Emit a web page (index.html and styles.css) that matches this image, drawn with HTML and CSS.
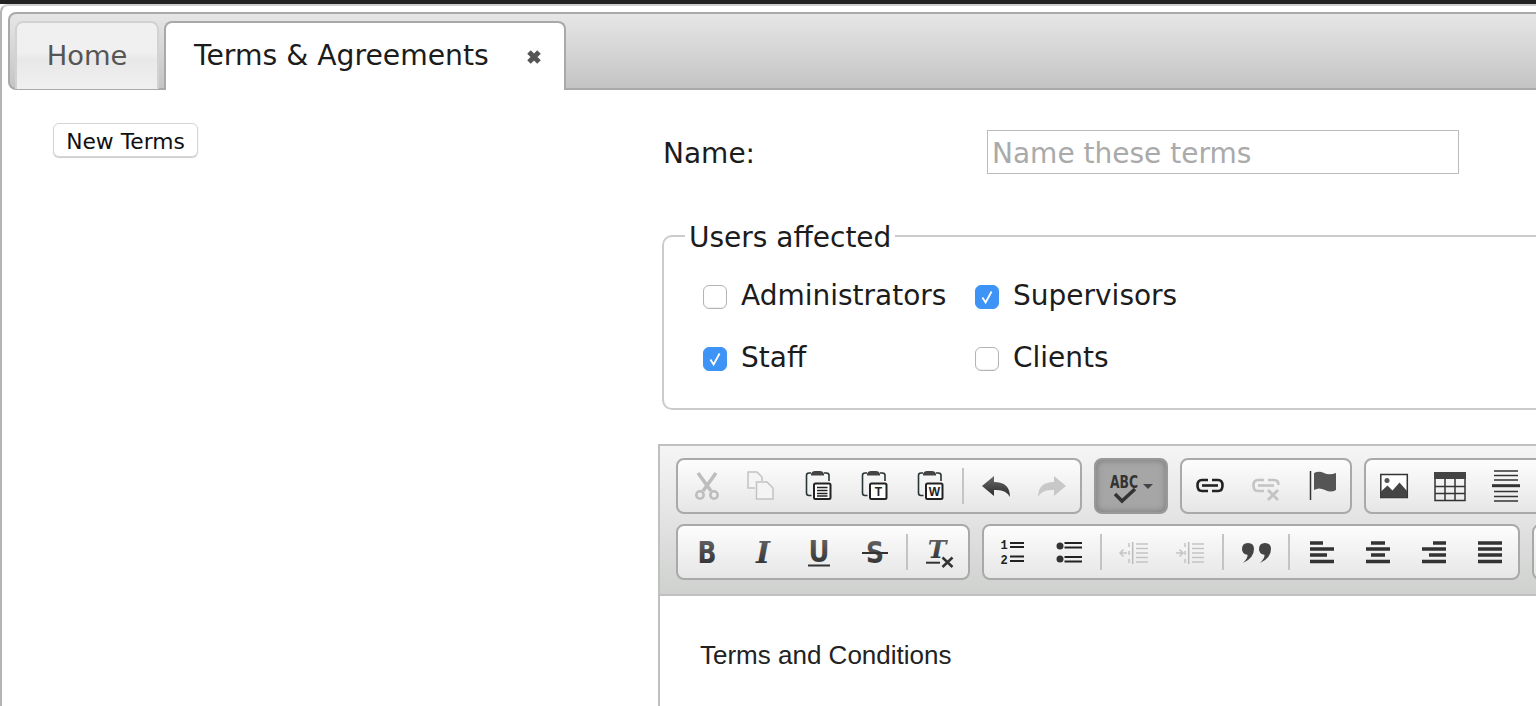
FILE: index.html
```html
<!DOCTYPE html>
<html lang="en">
<head>
<meta charset="utf-8">
<title>Terms &amp; Agreements</title>
<link rel="stylesheet" href="styles.css">
</head>
<body>
<svg class="defs" width="0" height="0" aria-hidden="true">
  <defs>
    <linearGradient id="dark" x1="0" y1="0" x2="0" y2="1"><stop offset="0" stop-color="#6a6a6a"/><stop offset="1" stop-color="#2a2a2a"/></linearGradient>
    <symbol id="clip" viewBox="0 0 32 32">
      <path d="M8 3H6Q3.500 3 3.500 5.500V23Q3.500 25.500 6 25.500H8.500M21 3H23.500Q26 3 26 5.500V11" fill="none" stroke="#2b3436" stroke-width="1.600"/>
      <path d="M8 5.500V3.500Q9 1 11.500 1H17.500Q20 1 21 3.500V5.500Z" fill="#444"/>
      <rect x="11" y="13.500" width="16.500" height="15.500" rx="1.500" fill="#fff" stroke="#222" stroke-width="2"/>
    </symbol>
  </defs>
</svg>
<div class="top-strip"></div>
<div class="window">
  <nav class="tabs">
    <a class="tab">Home</a>
    <a class="tab tab-active">Terms &amp; Agreements<svg class="tab-close" viewBox="0 0 16 16"><path d="M3 3L13 13M13 3L3 13" stroke="#555" stroke-width="5"/></svg></a>
  </nav>
  <main class="content">
    <aside class="sidebar"><button class="new-btn" type="button">New Terms</button></aside>
    <section class="form">
      <div class="name-row">
        <label class="name-label" for="name">Name:</label>
        <input class="name-input" id="name" type="text" placeholder="Name these terms">
      </div>
      <fieldset class="users">
        <legend>Users affected</legend>
        <div class="users-grid">
          <label class="check"><span class="box"></span>Administrators</label>
          <label class="check"><span class="box on"><svg viewBox="0 0 24 24"><path d="M7 12.500L10.500 18L17 6" fill="none" stroke="#fff" stroke-width="2"/></svg></span>Supervisors</label>
          <label class="check"><span class="box on"><svg viewBox="0 0 24 24"><path d="M7 12.500L10.500 18L17 6" fill="none" stroke="#fff" stroke-width="2"/></svg></span>Staff</label>
          <label class="check"><span class="box"></span>Clients</label>
        </div>
      </fieldset>
      <div class="editor">
        <div class="toolbar">
          <div class="tool-row">
            <div class="group">
              <span class="btn"><svg viewBox="0 0 32 32"><g fill="none" stroke="#bdbdbd"><path d="M7 3L20 21M25 3L12 21" stroke-width="3.500"/><circle cx="9" cy="25" r="3.700" stroke-width="2.500"/><circle cx="23" cy="25" r="3.700" stroke-width="2.500"/></g></svg></span>
              <span class="btn"><svg viewBox="0 0 32 32"><g fill="#f4f4f4" stroke="#c2c2c2" stroke-width="1.500"><path d="M8 18H1V2H10L15 7V11"/><path d="M9.500 12H20L26 18V29H9.500Z"/></g></svg></span>
              <span class="btn"><svg viewBox="0 0 32 32"><use href="#clip"/><path d="M14 17.500H24.500M14 20.500H24.500M14 23.500H24.500M14 26H24.500" stroke="#222" stroke-width="1.500"/></svg></span>
              <span class="btn"><svg viewBox="0 0 32 32"><use href="#clip"/><text class="glyph-t" x="19.300" y="26">T</text></svg></span>
              <span class="btn"><svg viewBox="0 0 32 32"><use href="#clip"/><text class="glyph-t" x="19.300" y="26">W</text></svg></span>
              <span class="sep"></span>
              <span class="btn"><svg viewBox="0 0 32 32"><path d="M2 16L14 6V12Q30 12 30 27Q26 19 14 20V26Z" fill="url(#dark)"/></svg></span>
              <span class="btn"><svg viewBox="0 0 32 32"><path d="M30 16L18 6V12Q2 12 2 27Q6 19 18 20V26Z" fill="#c8c8c8"/></svg></span>
            </div>
            <div class="group group-on">
              <svg class="spell" viewBox="0 0 70 52"><text class="abc" x="14" y="28" textLength="28" lengthAdjust="spacingAndGlyphs">ABC</text><path d="M19 34L26 41L39 29" fill="none" stroke="#333" stroke-width="3.500"/><path d="M47 24H57L52 29Z" fill="#444"/></svg>
            </div>
            <div class="group group-flush">
              <span class="btn"><svg viewBox="0 0 32 32"><g fill="none" stroke="#222" stroke-width="2.600"><path d="M14 10H8Q3.500 10 3.500 15.500Q3.500 21 8 21H14"/><path d="M18 10H24Q28.500 10 28.500 15.500Q28.500 21 24 21H18"/><path d="M8 15.500H24"/></g></svg></span>
              <span class="btn"><svg viewBox="0 0 32 32"><g fill="none" stroke="#c4c4c4" stroke-width="2.600"><path d="M14 10H8Q3.500 10 3.500 15.500Q3.500 21 8 21H14"/><path d="M18 10H24Q28.500 10 28.500 15"/><path d="M8 15.500H24"/><path d="M18 20L28 30M28 20L18 30" stroke-width="3"/></g></svg></span>
              <span class="btn"><svg viewBox="0 0 32 32"><path d="M4.500 1V30" stroke="#333" stroke-width="1.500"/><path d="M8 3Q13 0.500 18 3T30 3V20Q25 23 19 20T8 20Z" fill="#555"/></svg></span>
            </div>
            <div class="group group-flush group-open">
              <span class="btn"><svg viewBox="0 0 32 32"><rect x="2.800" y="4.500" width="26.500" height="23" fill="#fff" stroke="#333" stroke-width="1.500"/><circle cx="9" cy="10.500" r="2.500" fill="#555"/><path d="M3 27.500V21.500L9.500 15.500L14.500 20.500L21.500 12.500L29 21V27.500Z" fill="#444"/></svg></span>
              <span class="btn"><svg viewBox="0 0 32 32"><rect x="0" y="2" width="32" height="7" fill="#444"/><path d="M1 9V30.500H31V9M1 16.500H31M1 23.500H31M11 9V30.500M21 9V30.500" fill="none" stroke="#333" stroke-width="1.500"/></svg></span>
              <span class="btn"><svg viewBox="0 0 32 32"><path d="M4 1H28M4 5.500H28M4 10H28M4 21.500H28M4 26.500H28M4 31H28" stroke="#333" stroke-width="1.600"/><path d="M2 15.700H30" stroke="#333" stroke-width="3"/></svg></span>
            </div>
          </div>
          <div class="tool-row">
            <div class="group">
              <span class="btn"><svg class="tall" viewBox="0 0 40 40"><text class="fmt fmt-b" x="20" y="31" textLength="19" lengthAdjust="spacingAndGlyphs">B</text></svg></span>
              <span class="btn"><svg class="tall" viewBox="0 0 40 40"><text class="fmt fmt-i" x="20" y="31">I</text></svg></span>
              <span class="btn"><svg class="tall" viewBox="0 0 40 40"><text class="fmt fmt-b" x="20" y="30" textLength="21" lengthAdjust="spacingAndGlyphs">U</text><path d="M9 33.500H31" stroke="#333" stroke-width="2"/></svg></span>
              <span class="btn"><svg class="tall" viewBox="0 0 40 40"><text class="fmt fmt-b" x="20" y="31" textLength="18" lengthAdjust="spacingAndGlyphs">S</text><path d="M7 21H33" stroke="#333" stroke-width="2"/></svg></span>
              <span class="sep"></span>
              <span class="btn"><svg class="tall" viewBox="0 0 40 40"><text class="fmt fmt-i fmt-t" x="17" y="26">T</text><path d="M6 30.700H20" stroke="#333" stroke-width="2"/><path d="M22.500 25.500L32.500 35M32.500 25.500L22.500 35" stroke="#333" stroke-width="2.500"/></svg></span>
            </div>
            <div class="group">
              <span class="btn"><svg viewBox="0 0 32 32"><text class="num" x="7" y="13">1</text><text class="num" x="7" y="28">2</text><path d="M13 7H27M13 11H27M13 20.500H27M13 25H27" stroke="#222" stroke-width="2"/></svg></span>
              <span class="btn"><svg viewBox="0 0 32 32"><circle cx="7" cy="10" r="3.500" fill="#333"/><circle cx="7" cy="23" r="3.500" fill="#333"/><path d="M11.500 7H29M11.500 11.500H29M11.500 21H29M11.500 25.500H29" stroke="#222" stroke-width="2"/></svg></span>
              <span class="sep"></span>
              <span class="btn"><svg viewBox="0 0 32 32"><path d="M14.700 6V28" stroke="#bbb" stroke-width="1.500"/><path d="M18 8H30M18 12.500H30M18 17H30M18 21.500H30M18 26H30" stroke="#c4c4c4" stroke-width="1.500"/><path d="M2 17H9M5.500 13.500L2 17L5.500 20.500" fill="none" stroke="#c4c4c4" stroke-width="1.500"/><path d="M11 7V11M11 15V19M11 23V27" stroke="#c4c4c4" stroke-width="1.500"/></svg></span>
              <span class="btn"><svg viewBox="0 0 32 32"><path d="M14.700 6V28" stroke="#bbb" stroke-width="1.500"/><path d="M18 8H30M18 12.500H30M18 17H30M18 21.500H30M18 26H30" stroke="#c4c4c4" stroke-width="1.500"/><path d="M2 17H9M5.500 13.500L9 17L5.500 20.500" fill="none" stroke="#c4c4c4" stroke-width="1.500"/><path d="M11 7V11M11 15V19M11 23V27" stroke="#c4c4c4" stroke-width="1.500"/></svg></span>
              <span class="sep sep-wide"></span>
              <span class="btn"><svg viewBox="0 0 32 32"><path d="M8 7Q14 7 14 13Q14 22 3 27Q8 22 7.500 18.800Q2 18 2 13Q2 7 8 7ZM25 7Q31 7 31 13Q31 22 20 27Q25 22 24.500 18.800Q19 18 19 13Q19 7 25 7Z" fill="#444"/></svg></span>
              <span class="sep sep-wide"></span>
              <span class="btn"><svg viewBox="0 0 32 32"><path d="M4 7H17M4 13H28M4 19H21M4 25.500H28" stroke="#333" stroke-width="3.500"/></svg></span>
              <span class="btn"><svg viewBox="0 0 32 32"><path d="M9 7H23M4 13H28M9 19H23M4 25.500H28" stroke="#333" stroke-width="3.500"/></svg></span>
              <span class="btn"><svg viewBox="0 0 32 32"><path d="M15 7H28M4 13H28M11 19H28M4 25.500H28" stroke="#333" stroke-width="3.500"/></svg></span>
              <span class="btn"><svg viewBox="0 0 32 32"><path d="M4 7H28M4 13H28M4 19H28M4 25.500H28" stroke="#333" stroke-width="3.500"/></svg></span>
            </div>
            <div class="group group-flush group-open"></div>
          </div>
        </div>
        <div class="editor-body">
          <p>Terms and Conditions</p>
        </div>
      </div>
    </section>
  </main>
</div>
</body>
</html>
```
FILE: styles.css
```css
* { box-sizing: border-box; }
html, body { margin: 0; padding: 0; height: 100%; overflow: hidden; background: #fff; }
body { font-family: "DejaVu Sans", sans-serif; color: #1c1c1c; }
.defs { position: absolute; }
.top-strip { height: 4px; background: #222; }
.window {
  height: 702px; width: 1600px; overflow: hidden;
  border: 2px solid #b4b4b4; border-bottom: 0; border-right: 0;
  border-top-left-radius: 8px;
  border-top-color: #cfcfcf;
  padding: 6px 0 0 6px;
  background: #fff;
}
.tabs {
  display: flex; gap: 5px; align-items: flex-end;
  height: 78px; padding-left: 5px;
  border: 2px solid #a9a9a9; border-radius: 8px 0 0 8px;
  background: linear-gradient(#e6e6e6, #c4c4c4);
}
.tab {
  display: block; height: 68px; width: 144px; margin-bottom: -1px;
  border: 2px solid #d2d2d2; border-bottom: 0; border-radius: 8px 8px 0 0;
  background: linear-gradient(#f0f0f0 0 45%, #e8e8e8 55%, #f0f0f0);
  color: #555; font-size: 27.300px; line-height: 65px; text-align: center;
}
.tab-active {
  position: relative; width: 402px; height: 69px; margin-bottom: -2px;
  border-color: #a9a9a9; background: #fff; color: #1c1c1c;
  font-size: 28.250px;
  text-align: left; padding-left: 28px;
}
.tab-close { position: absolute; left: 360px; top: 26px; width: 16px; height: 16px; }
.content { display: flex; }
.sidebar { width: 647px; flex: none; padding: 33px 0 0 45px; }
.new-btn {
  display: block; width: 145px; height: 34px; padding: 3px 0 0;
  background: #fff; border: 1px solid #d5d5d5; border-radius: 6px;
  box-shadow: 0 1px 1px #ccc;
  font: 21.800px "DejaVu Sans", sans-serif; color: #111;
}
.form { width: 1000px; flex: none; padding-top: 40px; }
.name-row { display: flex; align-items: center; height: 44px; padding-left: 8px; font-size: 28px; }
.name-label { width: 324px; flex: none; padding-top: 2px; }
.name-input {
  width: 472px; height: 44px; padding: 2px 4px 0;
  border: 1px solid #bbb; background: #fff;
  font: 28px "DejaVu Sans", sans-serif; color: #1c1c1c; outline: 0;
}
.name-input::placeholder { color: #aaa; opacity: 1; }
.users {
  margin: 43px 0 0 7px; padding: 9px 0 0; height: 193px; width: 990px;
  border: 2px solid #ccc; border-radius: 10px;
  font-size: 28px;
}
.users legend { margin-left: 21px; padding: 4px 4px 0; font-size: 28px; line-height: 34px; }
.users-grid { display: grid; padding-left: 39px; grid-template-columns: 272px auto; justify-content: start; grid-auto-rows: 62px; }
.check { display: flex; align-items: center; gap: 14px; height: 62px; }
.box {
  width: 24px; height: 24px; flex: none; margin-top: 3px;
  border: 1px solid #b4b4b4; border-radius: 6px; background: #fff;
  box-shadow: inset 0 -1px 1px #eee;
}
.box svg { display: block; width: 100%; height: 100%; }
.box.on { background: #3d94f6; border-color: #3d94f6; box-shadow: none; }
.editor {
  margin: 34px 0 0 3px; width: 990px;
  border: 2px solid #c0c0c0; border-bottom: 0; border-right: 0;
}
.toolbar {
  height: 150px; padding: 12px 0 0 16px;
  background: linear-gradient(#f5f5f5, #cfd1cf);
  border-bottom: 2px solid #bfc0bf;
}
.tool-row { display: flex; gap: 12px; height: 56px; margin-bottom: 10px; }
.group {
  display: flex; align-items: center; flex: none; height: 56px; padding: 0 0 0 1px;
  border: 2px solid #a9a9a9; border-radius: 8px;
  background: linear-gradient(#fdfdfd, #e6e6e6);
}
.group-flush { padding: 0; }
.group-open { width: 300px; }
.group-on {
  width: 74px; padding: 0; border-color: #999;
  background: #a6a6a6; box-shadow: inset 0 0 7px #777;
}
.spell { display: block; width: 70px; height: 52px; }
.abc { font: 700 17px "DejaVu Sans Condensed", "DejaVu Sans", sans-serif; fill: #333; }
.btn { display: flex; align-items: center; justify-content: center; width: 56px; height: 52px; flex: none; }
.btn svg { display: block; width: 32px; height: 32px; }
.btn svg.tall { width: 40px; height: 40px; }
.sep { width: 2px; height: 36px; margin: 0 4px 0 3px; flex: none; background: #c4c4c4; }
.sep-wide { margin-left: 4px; }
.glyph-t { font: 700 12px "Liberation Sans", sans-serif; fill: #222; text-anchor: middle; }
.fmt { font-size: 30px; fill: url(#dark); text-anchor: middle; }
.fmt-b { font-family: "DejaVu Sans", sans-serif; font-weight: 700; }
.fmt-i { font-family: "DejaVu Serif", serif; font-style: italic; font-weight: 700; }
.fmt-t { font-size: 25px; }
.num { font: 700 12px "Liberation Mono", monospace; fill: #222; text-anchor: middle; }
.editor-body { padding: 41px 40px 0; background: #fff; height: 200px; }
.editor-body p { margin: 0; font: 26px/36px "Liberation Sans", sans-serif; color: #222; }
```
